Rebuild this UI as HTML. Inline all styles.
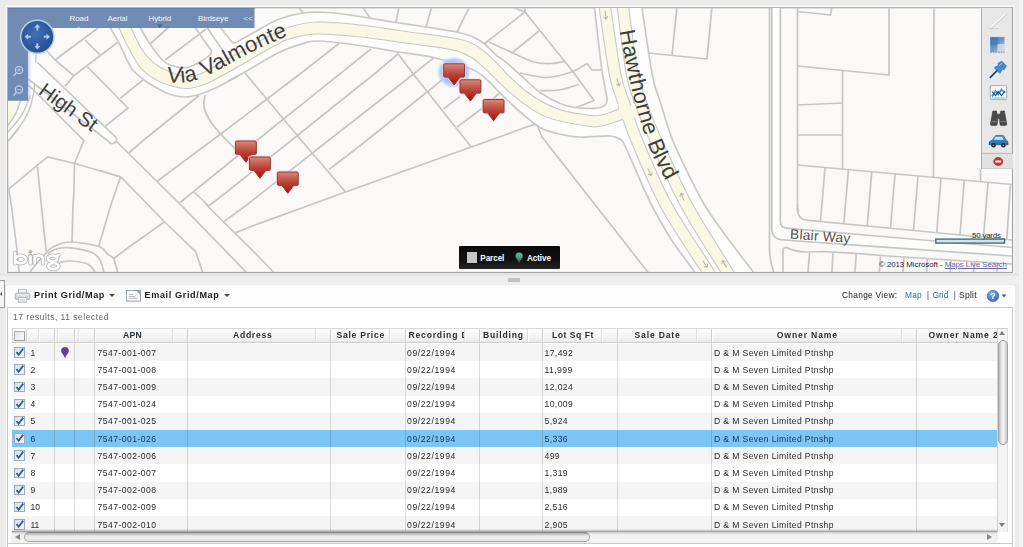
<!DOCTYPE html>
<html><head><meta charset="utf-8"><title>Map</title>
<style>
html,body{margin:0;padding:0}
body{width:1024px;height:547px;overflow:hidden;background:#ebebeb;font-family:"Liberation Sans",sans-serif;position:relative}
.abs{position:absolute}
#wrap{position:absolute;left:0;top:0;width:1024px;height:547px;filter:blur(.4px)}
#map{position:absolute;left:0;top:0;width:1024px;height:547px}
.navt{position:absolute;top:13.5px;font-size:8px;color:#fff;letter-spacing:-.1px;opacity:.93}
#legend{position:absolute;left:459.300px;top:246.100px;width:101.200px;height:22.800px;background:linear-gradient(#0a0a0a,#111 60%,#232323);border-radius:1px}
#legend span{position:absolute;top:7.500px;font-size:8.200px;color:#fff;font-weight:bold;white-space:nowrap}
#tb{position:absolute;left:981.300px;top:8px;width:31px;height:160.500px;background:#e7e7e7;border-left:1px solid #adadad;border-bottom:1px solid #b5b5b5;box-sizing:border-box;box-shadow:-1px 0 0 #fdfdfd}
#copy{position:absolute;left:879px;top:260px;font-size:7.9px;color:#2c2c2c;white-space:nowrap;letter-spacing:-.06px}
#copy u{color:#6767ad}
#scaleT{position:absolute;left:972px;top:230.600px;font-size:7.900px;white-space:nowrap;color:#222;text-shadow:0 0 1px #fff}
/* bottom */
#split{position:absolute;left:0;top:273px;width:1024px;height:12px;background:linear-gradient(#e4e4e4,#e6e6e6 22%,#eeeeee 30%,#f0f0f0 90%,#e9e9e9)}
#panel{position:absolute;left:5.600px;top:284.600px;width:1009.200px;height:263px;background:#fcfcfc;border-radius:3px 3px 0 0}
#inner{position:absolute;left:7.200px;top:307.100px;width:1006px;height:240px;background:#fff;border:1px solid #c6c6c6;border-bottom:none;box-sizing:border-box}
.tbt{position:absolute;top:289.6px;font-weight:bold;color:#1a1a1a;white-space:nowrap}
.cv{position:absolute;top:290.3px;color:#222;white-space:nowrap;font-size:8.4px}
.res{position:absolute;top:312.4px;color:#666;white-space:nowrap}
#grid{position:absolute;left:12px;top:328px;width:995px;height:215px;overflow:hidden}
#hdr{position:absolute;left:11.800px;top:327.600px;width:985.200px;height:15px;background:linear-gradient(#fcfcfc,#f5f5f5 50%,#eaeaea);border-top:1px solid #d9d9d9;border-bottom:1px solid #cdcdcd;border-left:1px solid #d4d4d4;box-sizing:border-box}
.h{position:absolute;top:330px;font-size:8.6px;font-weight:bold;color:#263034;white-space:nowrap}
.row{position:absolute;left:12px;width:985px;height:17.2px;background:#fff}
.row.alt{background:#f5f5f5}
.row.sel{background:#7cc6f5}
.row .t{position:absolute;top:3.6px;font-size:8.6px;color:#2a2a2a;white-space:nowrap}
.row.sel .t{color:#0b3c63}
.cb{position:absolute;left:2.100px;top:3.200px;width:8.800px;height:8.400px;border:1px solid #9fabb6;background:linear-gradient(135deg,#d3e2ef,#f3f7fa);}
.cb svg{position:absolute;left:0;top:0}
.pin{position:absolute;left:48.500px;top:3px}
.vl{position:absolute;top:343px;width:1px;height:189px;background:rgba(0,0,0,.13)}
.hs{position:absolute;top:328.500px;width:1px;height:13.500px;background:#dfdfdf;box-shadow:1px 0 0 #fcfcfc}
.hm{position:absolute;top:328.500px;width:1px;height:13.500px;background:#cfcfcf;box-shadow:1px 0 0 #fcfcfc}
</style></head><body><div id="wrap">
<div class="abs" style="left:5.600px;top:4.600px;width:1009.200px;height:268px;background:#f6f6f6"></div>
<svg id="map" viewBox="0 0 1024 547">
<defs>
<clipPath id="mc"><rect x="8" y="8" width="1004" height="264"/></clipPath>
<linearGradient id="mk" x1="0" y1="0" x2="0" y2="1"><stop offset="0" stop-color="#dd8b80"/><stop offset=".12" stop-color="#d2766a"/><stop offset=".45" stop-color="#bd4a3f"/><stop offset=".62" stop-color="#b5362c"/><stop offset=".72" stop-color="#c3261e"/><stop offset="1" stop-color="#8a1611"/></linearGradient>
<radialGradient id="glow"><stop offset=".5" stop-color="#8fb0f5" stop-opacity="1"/><stop offset=".8" stop-color="#a9c4f8" stop-opacity=".75"/><stop offset="1" stop-color="#c5d8fb" stop-opacity="0"/></radialGradient>
<radialGradient id="cmp" cx=".45" cy=".4" r=".7"><stop offset="0" stop-color="#3f6fb3"/><stop offset="1" stop-color="#1f4a8c"/></radialGradient>
</defs>
<rect x="7.700" y="7.800" width="1004.900" height="264.600" fill="#faf9f8" stroke="#9a9a9a" stroke-width="1"/>
<g clip-path="url(#mc)">
<path d="M219.0,26.0 C220.5,27.8 226.0,34.5 228.0,37.0 C230.0,39.5 229.7,40.1 231.0,41.0 C232.3,41.9 232.3,43.8 236.0,42.5 C239.7,41.2 246.0,36.8 253.0,33.0 C260.0,29.2 269.7,22.8 278.0,19.5 C286.3,16.2 294.7,14.2 303.0,13.0 C311.3,11.8 319.2,12.0 328.0,12.5 C336.8,13.0 344.7,14.3 356.0,16.0 C367.3,17.7 384.3,20.7 396.0,22.5 C407.7,24.3 415.8,25.4 426.0,27.0 C436.2,28.6 449.3,30.4 457.0,32.0 C464.7,33.6 467.5,34.6 472.0,36.5 C476.5,38.4 479.9,40.3 484.0,43.5 C488.1,46.7 493.2,52.7 496.5,55.5 C499.8,58.3 499.8,57.1 504.0,60.5 C508.2,63.9 515.5,70.7 521.5,76.0 C527.5,81.3 533.3,87.8 540.0,92.5 C546.7,97.2 555.0,101.4 561.5,104.0 C568.0,106.6 572.9,107.3 579.0,108.0 C585.1,108.7 593.8,108.4 598.0,108.0 C602.2,107.6 603.0,106.8 604.5,105.5 C606.0,104.2 607.1,103.9 607.0,100.0 C606.9,96.1 604.9,87.4 604.0,82.0 C603.1,76.6 601.9,69.9 601.5,67.5 L594,0 L641,0 L642.0,8.0 C643.8,19.3 649.5,60.5 652.5,76.0 C655.5,91.5 656.9,91.0 660.0,101.0 C663.1,111.0 667.3,126.0 671.0,136.0 C674.7,146.0 676.5,149.7 682.0,161.0 C687.5,172.3 696.4,191.2 704.0,204.0 C711.6,216.8 719.7,227.2 727.5,238.0 C735.3,248.8 746.2,262.7 751.0,269.0 C755.8,275.3 755.2,274.8 756.0,276.0 L697,276 L697.0,276.0 C696.2,274.8 696.8,275.2 692.5,269.0 C688.2,262.8 677.9,249.8 671.0,239.0 C664.1,228.2 656.7,215.0 651.0,204.0 C645.3,193.0 641.5,183.1 637.0,173.0 C632.5,162.9 626.2,148.4 624.0,143.5 L624.0,143.5 C623.5,142.9 623.2,141.2 621.0,140.0 C618.8,138.8 617.8,136.5 611.0,136.0 C604.2,135.5 589.0,137.4 580.0,137.0 C571.0,136.6 563.7,135.1 557.0,133.5 C550.3,131.9 545.3,130.4 540.0,127.5 C534.7,124.6 531.2,121.2 525.0,116.0 C518.8,110.8 509.8,102.5 503.0,96.0 C496.2,89.5 489.8,81.7 484.0,77.0 C478.2,72.3 476.9,71.2 468.5,68.0 C460.1,64.8 445.2,60.2 433.5,57.5 C421.8,54.8 411.4,54.1 398.5,52.0 C385.6,49.9 369.4,46.8 356.0,45.0 C342.6,43.2 326.8,41.2 318.0,41.0 C309.2,40.8 309.7,41.5 303.0,43.5 C296.3,45.5 288.7,47.7 278.0,53.0 C267.3,58.3 249.4,69.7 239.0,75.5 C228.6,81.3 221.9,84.9 215.5,88.0 C209.1,91.1 205.5,92.5 200.5,94.0 C195.5,95.5 190.8,97.0 185.5,97.0 C180.2,97.0 173.8,95.5 169.0,94.0 C164.2,92.5 161.2,90.3 157.0,88.0 C152.8,85.7 148.3,83.4 144.0,80.0 C139.7,76.6 135.0,73.3 131.0,67.5 C127.0,61.7 123.3,51.4 120.0,45.0 C116.7,38.6 113.3,33.2 111.0,29.0 C108.7,24.8 106.8,21.5 106.0,20.0 L137,20 L137.0,20.0 C137.7,21.5 138.8,25.0 141.0,29.0 C143.2,33.0 146.8,39.2 150.0,44.0 C153.2,48.8 156.7,54.0 160.0,57.5 C163.3,61.0 165.4,63.3 170.0,65.0 C174.6,66.7 182.0,68.3 187.5,67.5 C193.0,66.7 199.2,62.1 203.0,60.0 C206.8,57.9 208.6,56.5 210.0,55.0 C211.4,53.5 211.8,52.5 211.5,51.0 C211.2,49.5 208.6,46.8 208.0,46.0 L219,26 Z" fill="#fdfdfc" stroke="none"/>
<path d="M194,26 L211.5,52 L236,42.5 L219,26 Z" fill="#fdfdfc"/>
<path d="M106.0,20.0 C106.8,21.5 108.7,24.8 111.0,29.0 C113.3,33.2 116.7,38.6 120.0,45.0 C123.3,51.4 127.0,61.7 131.0,67.5 C135.0,73.3 139.7,76.6 144.0,80.0 C148.3,83.4 152.8,85.7 157.0,88.0 C161.2,90.3 164.2,92.5 169.0,94.0 C173.8,95.5 180.2,97.0 185.5,97.0 C190.8,97.0 195.5,95.5 200.5,94.0 C205.5,92.5 209.1,91.1 215.5,88.0 C221.9,84.9 228.6,81.3 239.0,75.5 C249.4,69.7 267.3,58.3 278.0,53.0 C288.7,47.7 296.3,45.5 303.0,43.5 C309.7,41.5 309.2,40.8 318.0,41.0 C326.8,41.2 342.6,43.2 356.0,45.0 C369.4,46.8 385.6,49.9 398.5,52.0 C411.4,54.1 421.8,54.8 433.5,57.5 C445.2,60.2 460.1,64.8 468.5,68.0 C476.9,71.2 478.2,72.3 484.0,77.0 C489.8,81.7 496.2,89.5 503.0,96.0 C509.8,102.5 518.8,110.8 525.0,116.0 C531.2,121.2 534.7,124.6 540.0,127.5 C545.3,130.4 550.3,131.9 557.0,133.5 C563.7,135.1 571.0,136.6 580.0,137.0 C589.0,137.4 604.2,135.5 611.0,136.0 C617.8,136.5 618.8,138.8 621.0,140.0 C623.2,141.2 623.5,142.9 624.0,143.5" fill="none" stroke="#cacac5" stroke-width="1.7"/>
<path d="M137.0,20.0 C137.7,21.5 138.8,25.0 141.0,29.0 C143.2,33.0 146.8,39.2 150.0,44.0 C153.2,48.8 156.7,54.0 160.0,57.5 C163.3,61.0 165.4,63.3 170.0,65.0 C174.6,66.7 182.0,68.3 187.5,67.5 C193.0,66.7 199.2,62.1 203.0,60.0 C206.8,57.9 208.6,56.5 210.0,55.0 C211.4,53.5 211.8,52.5 211.5,51.0 C211.2,49.5 210.9,50.2 208.0,46.0 C205.1,41.8 196.3,29.3 194.0,26.0" fill="none" stroke="#cacac5" stroke-width="1.7"/>
<path d="M219.0,26.0 C220.5,27.8 226.0,34.5 228.0,37.0 C230.0,39.5 229.7,40.1 231.0,41.0 C232.3,41.9 232.3,43.8 236.0,42.5 C239.7,41.2 246.0,36.8 253.0,33.0 C260.0,29.2 269.7,22.8 278.0,19.5 C286.3,16.2 294.7,14.2 303.0,13.0 C311.3,11.8 319.2,12.0 328.0,12.5 C336.8,13.0 344.7,14.3 356.0,16.0 C367.3,17.7 384.3,20.7 396.0,22.5 C407.7,24.3 415.8,25.4 426.0,27.0 C436.2,28.6 449.3,30.4 457.0,32.0 C464.7,33.6 467.5,34.6 472.0,36.5 C476.5,38.4 479.9,40.3 484.0,43.5 C488.1,46.7 493.2,52.7 496.5,55.5 C499.8,58.3 499.8,57.1 504.0,60.5 C508.2,63.9 515.5,70.7 521.5,76.0 C527.5,81.3 533.3,87.8 540.0,92.5 C546.7,97.2 555.0,101.4 561.5,104.0 C568.0,106.6 572.9,107.3 579.0,108.0 C585.1,108.7 593.8,108.4 598.0,108.0 C602.2,107.6 603.0,106.8 604.5,105.5 C606.0,104.2 607.1,103.9 607.0,100.0 C606.9,96.1 604.9,87.4 604.0,82.0 C603.1,76.6 603.1,79.8 601.5,67.5 C599.9,55.2 595.8,19.2 594.5,8.0 C593.2,-3.2 594.1,1.3 594.0,0.0" fill="none" stroke="#cacac5" stroke-width="1.7"/>
<path d="M641.0,0.0 C641.2,1.3 640.1,-4.7 642.0,8.0 C643.9,20.7 649.5,60.5 652.5,76.0 C655.5,91.5 656.9,91.0 660.0,101.0 C663.1,111.0 667.3,126.0 671.0,136.0 C674.7,146.0 676.5,149.7 682.0,161.0 C687.5,172.3 696.4,191.2 704.0,204.0 C711.6,216.8 719.7,227.2 727.5,238.0 C735.3,248.8 746.2,262.7 751.0,269.0 C755.8,275.3 755.2,274.8 756.0,276.0" fill="none" stroke="#cacac5" stroke-width="1.7"/>
<path d="M624.0,143.5 C626.2,148.4 632.5,162.9 637.0,173.0 C641.5,183.1 645.3,193.0 651.0,204.0 C656.7,215.0 664.1,228.2 671.0,239.0 C677.9,249.8 688.2,262.8 692.5,269.0 C696.8,275.2 696.2,274.8 697.0,276.0" fill="none" stroke="#cacac5" stroke-width="1.7"/>
<path d="M206.0,26.0 L222.5,50.0" fill="none" stroke="#cacac5" stroke-width="1.7"/>
<path d="M127.0,20.0 C127.7,21.5 128.7,24.2 131.0,29.0 C133.3,33.8 137.4,43.4 141.0,49.0 C144.6,54.6 148.1,58.8 152.5,62.5 C156.9,66.2 162.0,69.1 167.5,71.5 C173.0,73.9 180.1,76.5 185.5,77.0 C190.9,77.5 195.1,76.2 200.0,74.5 C204.9,72.8 208.3,70.6 215.0,67.0 C221.7,63.4 230.8,58.2 240.0,53.0 C249.2,47.8 262.0,40.2 270.0,36.0 C278.0,31.8 280.4,30.2 288.0,28.0 C295.6,25.8 304.2,23.0 315.5,22.5 C326.8,22.0 340.9,23.4 356.0,25.0 C371.1,26.6 389.3,29.7 406.0,32.0 C422.7,34.3 445.0,37.0 456.0,39.0 C467.0,41.0 467.3,41.8 472.0,44.0 C476.7,46.2 480.5,49.3 484.0,52.0 C487.5,54.7 487.8,54.9 493.0,60.0 C498.2,65.1 507.8,76.0 515.0,82.5 C522.2,89.0 529.2,94.4 536.5,99.0 C543.8,103.6 551.1,107.3 559.0,110.0 C566.9,112.7 577.3,114.0 584.0,115.0 C590.7,116.0 593.4,116.8 599.0,116.0 C604.6,115.2 614.1,111.7 617.5,110.0 C620.9,108.3 619.2,106.7 619.5,106.0 L622.5,119.0 C618.6,120.2 605.4,125.0 599.0,126.0 C592.6,127.0 591.5,126.2 584.0,125.0 C576.5,123.8 562.3,121.5 554.0,119.0 C545.7,116.5 541.5,114.7 534.0,110.0 C526.5,105.3 517.3,98.2 509.0,91.0 C500.7,83.8 490.5,72.8 484.0,67.0 C477.5,61.2 475.5,59.0 470.0,56.0 C464.5,53.0 461.7,51.2 451.0,49.0 C440.3,46.8 421.8,44.7 406.0,42.5 C390.2,40.3 371.1,37.5 356.0,36.0 C340.9,34.5 326.7,33.1 315.5,33.5 C304.3,33.9 296.0,36.5 289.0,38.5 C282.0,40.5 282.8,40.7 273.8,45.6 C264.7,50.5 244.9,62.4 234.8,68.1 C224.6,73.8 218.8,77.1 213.0,80.0 C207.2,82.9 204.6,84.2 200.0,85.5 C195.4,86.8 190.5,88.1 185.5,88.0 C180.5,87.9 174.9,86.5 170.0,85.0 C165.1,83.5 160.8,81.9 156.0,79.0 C151.2,76.1 145.5,72.8 141.0,67.5 C136.5,62.2 132.5,53.9 129.0,47.5 C125.5,41.1 122.2,33.6 120.0,29.0 C117.8,24.4 116.7,21.5 116.0,20.0 Z" fill="#f9f8e4" stroke="#cacac5" stroke-width="2.2" stroke-linejoin="round"/>
<path d="M604.0,0.0 C604.2,1.3 603.1,-4.7 605.0,8.0 C606.9,20.7 612.2,59.7 615.5,76.0 C618.8,92.3 621.8,96.0 625.0,106.0 C628.2,116.0 628.2,119.7 635.0,136.0 C641.8,152.3 653.6,181.8 665.5,204.0 C677.4,226.2 698.8,256.8 706.5,269.0 C714.2,281.2 710.7,275.7 711.5,277.0" fill="none" stroke="#cacac5" stroke-width="12.6"/>
<path d="M622.0,0.0 C622.2,1.3 621.2,-4.7 623.0,8.0 C624.8,20.7 629.3,59.7 632.5,76.0 C635.7,92.3 638.4,96.0 642.0,106.0 C645.6,116.0 646.7,119.7 654.0,136.0 C661.3,152.3 674.1,181.8 686.0,204.0 C697.9,226.2 718.1,256.8 725.5,269.0 C732.9,281.2 729.7,275.7 730.5,277.0" fill="none" stroke="#cacac5" stroke-width="12.6"/>
<path d="M127.0,20.0 C127.7,21.5 128.7,24.2 131.0,29.0 C133.3,33.8 137.4,43.4 141.0,49.0 C144.6,54.6 148.1,58.8 152.5,62.5 C156.9,66.2 162.0,69.1 167.5,71.5 C173.0,73.9 180.1,76.5 185.5,77.0 C190.9,77.5 195.1,76.2 200.0,74.5 C204.9,72.8 208.3,70.6 215.0,67.0 C221.7,63.4 230.8,58.2 240.0,53.0 C249.2,47.8 262.0,40.2 270.0,36.0 C278.0,31.8 280.4,30.2 288.0,28.0 C295.6,25.8 304.2,23.0 315.5,22.5 C326.8,22.0 340.9,23.4 356.0,25.0 C371.1,26.6 389.3,29.7 406.0,32.0 C422.7,34.3 445.0,37.0 456.0,39.0 C467.0,41.0 467.3,41.8 472.0,44.0 C476.7,46.2 480.5,49.3 484.0,52.0 C487.5,54.7 487.8,54.9 493.0,60.0 C498.2,65.1 507.8,76.0 515.0,82.5 C522.2,89.0 529.2,94.4 536.5,99.0 C543.8,103.6 551.1,107.3 559.0,110.0 C566.9,112.7 577.3,114.0 584.0,115.0 C590.7,116.0 593.4,116.8 599.0,116.0 C604.6,115.2 614.1,111.7 617.5,110.0 C620.9,108.3 619.2,106.7 619.5,106.0 L622.5,119.0 C618.6,120.2 605.4,125.0 599.0,126.0 C592.6,127.0 591.5,126.2 584.0,125.0 C576.5,123.8 562.3,121.5 554.0,119.0 C545.7,116.5 541.5,114.7 534.0,110.0 C526.5,105.3 517.3,98.2 509.0,91.0 C500.7,83.8 490.5,72.8 484.0,67.0 C477.5,61.2 475.5,59.0 470.0,56.0 C464.5,53.0 461.7,51.2 451.0,49.0 C440.3,46.8 421.8,44.7 406.0,42.5 C390.2,40.3 371.1,37.5 356.0,36.0 C340.9,34.5 326.7,33.1 315.5,33.5 C304.3,33.9 296.0,36.5 289.0,38.5 C282.0,40.5 282.8,40.7 273.8,45.6 C264.7,50.5 244.9,62.4 234.8,68.1 C224.6,73.8 218.8,77.1 213.0,80.0 C207.2,82.9 204.6,84.2 200.0,85.5 C195.4,86.8 190.5,88.1 185.5,88.0 C180.5,87.9 174.9,86.5 170.0,85.0 C165.1,83.5 160.8,81.9 156.0,79.0 C151.2,76.1 145.5,72.8 141.0,67.5 C136.5,62.2 132.5,53.9 129.0,47.5 C125.5,41.1 122.2,33.6 120.0,29.0 C117.8,24.4 116.7,21.5 116.0,20.0 Z" fill="#f9f8e4" stroke="none"/>
<path d="M604.0,0.0 C604.2,1.3 603.1,-4.7 605.0,8.0 C606.9,20.7 612.2,59.7 615.5,76.0 C618.8,92.3 621.8,96.0 625.0,106.0 C628.2,116.0 628.2,119.7 635.0,136.0 C641.8,152.3 653.6,181.8 665.5,204.0 C677.4,226.2 698.8,256.8 706.5,269.0 C714.2,281.2 710.7,275.7 711.5,277.0" fill="none" stroke="#f9f8e4" stroke-width="10.4"/>
<path d="M622.0,0.0 C622.2,1.3 621.2,-4.7 623.0,8.0 C624.8,20.7 629.3,59.7 632.5,76.0 C635.7,92.3 638.4,96.0 642.0,106.0 C645.6,116.0 646.7,119.7 654.0,136.0 C661.3,152.3 674.1,181.8 686.0,204.0 C697.9,226.2 718.1,256.8 725.5,269.0 C732.9,281.2 729.7,275.7 730.5,277.0" fill="none" stroke="#f9f8e4" stroke-width="10.4"/>
<path d="M618,104 L632,106 L636,117 L623,120 Z" fill="#f9f8e4"/>
<g transform="translate(605.5,15) rotate(-8)" stroke="#b4b4aa" stroke-width="1" fill="none"><path d="M0,-4 L0,4 M-2.2,1.5 L0,4 L2.2,1.5"/></g>
<g transform="translate(618,82) rotate(-17)" stroke="#b4b4aa" stroke-width="1" fill="none"><path d="M0,-4 L0,4 M-2.2,1.5 L0,4 L2.2,1.5"/></g>
<g transform="translate(649.5,172) rotate(-24)" stroke="#b4b4aa" stroke-width="1" fill="none"><path d="M0,-4 L0,4 M-2.2,1.5 L0,4 L2.2,1.5"/></g>
<g transform="translate(705,264) rotate(-32)" stroke="#b4b4aa" stroke-width="1" fill="none"><path d="M0,-4 L0,4 M-2.2,1.5 L0,4 L2.2,1.5"/></g>
<g transform="translate(682.5,197) rotate(156)" stroke="#b4b4aa" stroke-width="1" fill="none"><path d="M0,-4 L0,4 M-2.2,1.5 L0,4 L2.2,1.5"/></g>
<g transform="translate(724.5,264) rotate(148)" stroke="#b4b4aa" stroke-width="1" fill="none"><path d="M0,-4 L0,4 M-2.2,1.5 L0,4 L2.2,1.5"/></g>
<path d="M36.2,52.0 C36.1,53.5 36.2,54.6 35.8,61.0 C35.4,67.4 35.3,81.8 34.0,90.4 C32.7,99.0 31.0,105.9 28.0,112.8 C25.0,119.7 19.3,127.0 16.0,131.7 C12.7,136.4 10.0,139.0 8.3,141.0 C6.6,143.0 6.4,143.1 6.0,143.5 L6,52 Z" fill="#fdfdfc"/>
<path d="M22.5,95.0 C22.1,96.1 21.4,98.6 20.3,101.6 C19.2,104.6 18.0,108.9 16.0,112.8 C14.0,116.7 10.0,122.3 8.3,124.8 C6.6,127.3 6.4,127.5 6.0,128.0 L6,95 L22.5,95 Z" fill="#f9f8e4"/>
<path d="M36.2,52.0 C36.1,53.5 36.2,54.6 35.8,61.0 C35.4,67.4 35.3,81.8 34.0,90.4 C32.7,99.0 31.0,105.9 28.0,112.8 C25.0,119.7 19.3,127.0 16.0,131.7 C12.7,136.4 10.0,139.0 8.3,141.0 C6.6,143.0 6.4,143.1 6.0,143.5" fill="none" stroke="#cacac5" stroke-width="1.5"/>
<path d="M30.5,95.0 C30.1,96.1 29.2,98.6 28.0,101.6 C26.8,104.6 25.3,108.9 23.0,112.8 C20.7,116.7 16.8,121.7 14.3,124.8 C11.9,127.9 9.7,130.2 8.3,131.7 C6.9,133.2 6.4,133.6 6.0,134.0" fill="none" stroke="#cacac5" stroke-width="1.5"/>
<path d="M22.5,95.0 C22.1,96.1 21.4,98.6 20.3,101.6 C19.2,104.6 18.0,108.9 16.0,112.8 C14.0,116.7 10.0,122.3 8.3,124.8 C6.6,127.3 6.4,127.5 6.0,128.0" fill="none" stroke="#cacac5" stroke-width="1.5"/>
<path d="M37.5,62.5 L115.5,137 L116.5,139.5 L115,142.5 L111,143.5 L108,141 L32,82 L28,79 V62 Z" fill="#fdfdfc"/>
<path d="M47.0,51.0 L55.0,60.0 L73.8,75.6" fill="none" stroke="#c6c6c6" stroke-width="1.7" stroke-linejoin="round"/>
<path d="M55.0,60.0 L96.0,29.5 L100.0,26.0" fill="none" stroke="#c6c6c6" stroke-width="1.7" stroke-linejoin="round"/>
<path d="M85.0,40.0 L100.0,55.0" fill="none" stroke="#c6c6c6" stroke-width="1.7" stroke-linejoin="round"/>
<path d="M73.8,75.6 L117.5,42.5" fill="none" stroke="#c6c6c6" stroke-width="1.7" stroke-linejoin="round"/>
<path d="M65.0,86.2 L73.8,75.6" fill="none" stroke="#c6c6c6" stroke-width="1.7" stroke-linejoin="round"/>
<path d="M87.5,67.0 L128.0,108.0 L105.5,126.0" fill="none" stroke="#c6c6c6" stroke-width="1.7" stroke-linejoin="round"/>
<path d="M120.5,98.0 L143.0,80.0" fill="none" stroke="#c6c6c6" stroke-width="1.7" stroke-linejoin="round"/>
<path d="M37.5,62.5 L115.5,137.0" fill="none" stroke="#c6c6c6" stroke-width="1.7" stroke-linejoin="round"/>
<path d="M28.0,79.0 L32.0,82.0 L108.0,141.0" fill="none" stroke="#c6c6c6" stroke-width="1.7" stroke-linejoin="round"/>
<path d="M28.0,85.0 L32.0,88.5 L83.8,140.5 L74.5,163.5 L73.8,195.5 L73.0,204.0 L72.0,242.8" fill="none" stroke="#c6c6c6" stroke-width="1.7" stroke-linejoin="round"/>
<path d="M18.8,128.0 L8.0,141.0" fill="none" stroke="#c6c6c6" stroke-width="1.7" stroke-linejoin="round"/>
<path d="M8.0,189.5 L47.5,156.8 L75.0,163.5 L121.0,177.0" fill="none" stroke="#c6c6c6" stroke-width="1.7" stroke-linejoin="round"/>
<path d="M37.5,166.8 L41.2,204.0 L46.2,251.5" fill="none" stroke="#c6c6c6" stroke-width="1.7" stroke-linejoin="round"/>
<path d="M8.8,189.0 L11.2,204.0 L17.5,254.0 L19.0,272.0" fill="none" stroke="#c6c6c6" stroke-width="1.7" stroke-linejoin="round"/>
<path d="M120.5,177.0 L111.2,204.0 L98.8,246.0" fill="none" stroke="#c6c6c6" stroke-width="1.7" stroke-linejoin="round"/>
<path d="M116.0,141.0 L181.0,205.0 L245.5,271.5 L250.0,276.0" fill="none" stroke="#c6c6c6" stroke-width="1.7" stroke-linejoin="round"/>
<path d="M100.0,170.5 L121.0,177.0 L164.2,221.5 L195.5,251.5 L202.4,271.5 L203.0,276.0" fill="none" stroke="#c6c6c6" stroke-width="1.7" stroke-linejoin="round"/>
<path d="M164.2,222.0 L128.0,247.8 L113.8,258.5" fill="none" stroke="#c6c6c6" stroke-width="1.7" stroke-linejoin="round"/>
<path d="M128.8,153.0 L143.8,140.0 L199.0,95.5" fill="none" stroke="#c6c6c6" stroke-width="1.7" stroke-linejoin="round"/>
<path d="M157.5,181.0 L228.0,128.5 L298.0,75.5 L339.0,43.5" fill="none" stroke="#c6c6c6" stroke-width="1.7" stroke-linejoin="round"/>
<path d="M180.0,202.5 L256.8,140.5 L336.8,76.3 L371.0,49.0" fill="none" stroke="#c6c6c6" stroke-width="1.7" stroke-linejoin="round"/>
<path d="M193.8,192.0 L208.8,206.0" fill="none" stroke="#c6c6c6" stroke-width="1.7" stroke-linejoin="round"/>
<path d="M208.8,206.0 L228.0,191.0 L291.8,140.0 L356.0,88.5 L372.0,76.0 L398.0,54.0" fill="none" stroke="#c6c6c6" stroke-width="1.7" stroke-linejoin="round"/>
<path d="M205.5,204.0 L256.0,254.0 L273.5,272.0 L278.0,277.0" fill="none" stroke="#c6c6c6" stroke-width="1.7" stroke-linejoin="round"/>
<path d="M224.2,221.5 L248.0,204.0 L329.0,140.0 L356.0,119.0 L411.0,76.0 L433.5,58.0" fill="none" stroke="#c6c6c6" stroke-width="1.7" stroke-linejoin="round"/>
<path d="M235.5,232.8 L256.0,224.6 L303.0,207.5 L345.5,192.0 L511.5,132.5 L525.0,127.5 L536.5,124.0" fill="none" stroke="#c6c6c6" stroke-width="1.7" stroke-linejoin="round"/>
<path d="M245.0,73.0 L304.0,143.5 L345.5,192.0" fill="none" stroke="#c6c6c6" stroke-width="1.7" stroke-linejoin="round"/>
<path d="M329.0,169.5 L361.0,145.0 L442.0,80.0" fill="none" stroke="#c6c6c6" stroke-width="1.7" stroke-linejoin="round"/>
<path d="M397.0,52.5 L414.8,76.0 L468.5,143.5 L471.0,147.0" fill="none" stroke="#c6c6c6" stroke-width="1.7" stroke-linejoin="round"/>
<path d="M443.5,109.0 L460.0,96.5" fill="none" stroke="#c6c6c6" stroke-width="1.7" stroke-linejoin="round"/>
<path d="M457.0,127.0 L484.0,107.0 L500.0,92.5" fill="none" stroke="#c6c6c6" stroke-width="1.7" stroke-linejoin="round"/>
<path d="M228.0,81.0 L239.0,75.5" fill="none" stroke="#c6c6c6" stroke-width="1.7" stroke-linejoin="round"/>
<path d="M150.0,44.0 L170.0,26.0" fill="none" stroke="#c6c6c6" stroke-width="1.7" stroke-linejoin="round"/>
<path d="M165.0,60.0 L197.5,35.6 L206.0,29.0" fill="none" stroke="#c6c6c6" stroke-width="1.7" stroke-linejoin="round"/>
<path d="M298.0,6.0 L303.0,13.0" fill="none" stroke="#c6c6c6" stroke-width="1.7" stroke-linejoin="round"/>
<path d="M362.0,6.0 L370.0,18.0" fill="none" stroke="#c6c6c6" stroke-width="1.7" stroke-linejoin="round"/>
<path d="M399.0,6.0 L396.0,22.5" fill="none" stroke="#c6c6c6" stroke-width="1.7" stroke-linejoin="round"/>
<path d="M432.0,6.0 L426.0,27.0" fill="none" stroke="#c6c6c6" stroke-width="1.7" stroke-linejoin="round"/>
<path d="M470.0,6.0 L457.0,32.0" fill="none" stroke="#c6c6c6" stroke-width="1.7" stroke-linejoin="round"/>
<path d="M509.0,6.0 L525.0,12.0 L525.0,6.0" fill="none" stroke="#c6c6c6" stroke-width="1.7" stroke-linejoin="round"/>
<path d="M484.0,44.0 L525.0,12.0 L574.0,73.0 L594.0,100.5 L576.5,107.5" fill="none" stroke="#c6c6c6" stroke-width="1.7" stroke-linejoin="round"/>
<path d="M513.0,52.0 L539.0,31.0" fill="none" stroke="#c6c6c6" stroke-width="1.7" stroke-linejoin="round"/>
<path d="M587.0,63.5 L592.0,70.0 L601.5,70.0" fill="none" stroke="#c6c6c6" stroke-width="1.7" stroke-linejoin="round"/>
<path d="M537.0,125.0 L542.0,137.0 L647.0,271.0 L651.0,276.0" fill="none" stroke="#c6c6c6" stroke-width="1.7" stroke-linejoin="round"/>
<path d="M677.0,6.0 L672.0,55.5" fill="none" stroke="#c6c6c6" stroke-width="1.7" stroke-linejoin="round"/>
<path d="M648.0,53.0 L707.0,59.0 L712.0,6.0" fill="none" stroke="#c6c6c6" stroke-width="1.7" stroke-linejoin="round"/>
<path d="M797.5,6.0 L797.5,204.0 L797.7,211.5" fill="none" stroke="#c6c6c6" stroke-width="1.7" stroke-linejoin="round"/>
<path d="M797.5,11.5 L830.5,15.0 L832.0,6.0" fill="none" stroke="#c6c6c6" stroke-width="1.7" stroke-linejoin="round"/>
<path d="M889.0,6.0 L889.0,75.0 L797.5,66.0" fill="none" stroke="#c6c6c6" stroke-width="1.7" stroke-linejoin="round"/>
<path d="M842.5,71.0 L842.5,169.0" fill="none" stroke="#c6c6c6" stroke-width="1.7" stroke-linejoin="round"/>
<path d="M797.5,105.0 L842.5,103.0" fill="none" stroke="#c6c6c6" stroke-width="1.7" stroke-linejoin="round"/>
<path d="M797.5,135.0 L842.5,135.0" fill="none" stroke="#c6c6c6" stroke-width="1.7" stroke-linejoin="round"/>
<path d="M934.0,6.0 L933.5,177.0" fill="none" stroke="#c6c6c6" stroke-width="1.7" stroke-linejoin="round"/>
<path d="M980.5,168.0 L980.5,182.0" fill="none" stroke="#c6c6c6" stroke-width="1.7" stroke-linejoin="round"/>
<path d="M797.5,165.0 L1012.0,184.5" fill="none" stroke="#c6c6c6" stroke-width="1.7" stroke-linejoin="round"/>
<path d="M809.5,253.0 L808.0,272.0" fill="none" stroke="#c6c6c6" stroke-width="1.7" stroke-linejoin="round"/>
<path d="M833.0,252.0 L832.0,272.0" fill="none" stroke="#c6c6c6" stroke-width="1.7" stroke-linejoin="round"/>
<path d="M856.2,253.4 L855.0,272.0" fill="none" stroke="#c6c6c6" stroke-width="1.7" stroke-linejoin="round"/>
<path d="M880.6,255.2 L879.4,272.0" fill="none" stroke="#c6c6c6" stroke-width="1.7" stroke-linejoin="round"/>
<path d="M904.0,257.0 L903.0,272.0" fill="none" stroke="#c6c6c6" stroke-width="1.7" stroke-linejoin="round"/>
<path d="M927.5,258.5 L926.5,272.0" fill="none" stroke="#c6c6c6" stroke-width="1.7" stroke-linejoin="round"/>
<path d="M951.0,260.0 L950.0,272.0" fill="none" stroke="#c6c6c6" stroke-width="1.7" stroke-linejoin="round"/>
<path d="M974.5,261.5 L973.5,272.0" fill="none" stroke="#c6c6c6" stroke-width="1.7" stroke-linejoin="round"/>
<path d="M998.0,263.0 L997.0,272.0" fill="none" stroke="#c6c6c6" stroke-width="1.7" stroke-linejoin="round"/>
<path d="M825,167.5 L820.5,221.5" fill="none" stroke="#c6c6c6" stroke-width="1.7"/>
<path d="M848.5,169.6 L843.75,223.7" fill="none" stroke="#c6c6c6" stroke-width="1.7"/>
<path d="M871.75,171.8 L867.25,226.0" fill="none" stroke="#c6c6c6" stroke-width="1.7"/>
<path d="M895,173.9 L890.5,228.2" fill="none" stroke="#c6c6c6" stroke-width="1.7"/>
<path d="M918,176.0 L913.5,230.5" fill="none" stroke="#c6c6c6" stroke-width="1.7"/>
<path d="M941,178.0 L936.75,232.7" fill="none" stroke="#c6c6c6" stroke-width="1.7"/>
<path d="M964.25,180.2 L960,234.9" fill="none" stroke="#c6c6c6" stroke-width="1.7"/>
<path d="M988,182.3 L983.5,237.2" fill="none" stroke="#c6c6c6" stroke-width="1.7"/>
<path d="M1010.5,184.4 L1006.75,239.4" fill="none" stroke="#c6c6c6" stroke-width="1.7"/>
<path d="M205.0,95.0 C204.8,97.0 203.3,103.0 204.0,107.0 C204.7,111.0 206.2,114.5 209.0,119.0 C211.8,123.5 216.1,129.0 220.5,134.0 C224.9,139.0 232.2,145.8 235.5,149.0 C238.8,152.2 239.2,152.3 240.0,153.0" fill="none" stroke="#c6c6c6" stroke-width="1.7"/>
<path d="M489.0,42.0 C493.0,43.8 505.5,49.7 513.0,53.0 C520.5,56.3 527.6,60.2 534.0,62.0 C540.4,63.8 546.3,63.7 551.5,63.5 C556.7,63.3 562.8,61.4 565.0,61.0" fill="none" stroke="#c6c6c6" stroke-width="1.7"/>
<path d="M520.0,73.0 C524.4,73.8 537.9,77.7 546.5,77.5 C555.1,77.3 564.8,74.3 571.5,72.0 C578.2,69.7 584.4,64.9 587.0,63.5" fill="none" stroke="#c6c6c6" stroke-width="1.7"/>
<path d="M540.0,90.5 C543.2,90.4 552.5,91.0 559.0,90.0 C565.5,89.0 575.7,85.4 579.0,84.5" fill="none" stroke="#c6c6c6" stroke-width="1.7"/>
<path d="M46.2,252.8 C47.5,251.7 49.8,248.3 53.8,246.5 C57.7,244.7 62.5,242.0 70.0,242.0 C77.5,242.0 92.5,244.5 98.8,246.5 C105.0,248.5 105.0,251.9 107.5,254.0 C110.0,256.1 112.1,256.0 113.8,259.0 C115.4,262.0 116.8,269.2 117.5,272.0 C118.2,274.8 117.9,275.3 118.0,276.0" fill="none" stroke="#c6c6c6" stroke-width="1.7"/>
<path d="M47.5,254.0 C49.0,253.2 52.5,250.0 56.2,249.0 C60.0,248.0 64.0,247.1 70.0,247.8 C76.0,248.4 87.5,250.7 92.5,252.8 C97.5,254.8 98.1,256.8 100.0,260.0 C101.9,263.2 103.1,269.3 103.8,272.0 C104.4,274.7 104.0,275.3 104.0,276.0" fill="none" stroke="#c6c6c6" stroke-width="1.7"/>
<path d="M58.8,262.8 C60.6,262.5 65.2,260.8 70.0,261.0 C74.8,261.2 83.3,262.2 87.5,264.0 C91.7,265.8 93.6,270.0 95.0,272.0 C96.4,274.0 95.8,275.3 96.0,276.0" fill="none" stroke="#c6c6c6" stroke-width="1.7"/>
<path d="M30.0,272.0 C31.3,270.3 35.3,265.2 38.0,262.0 C40.7,258.8 44.9,254.3 46.2,252.8" fill="none" stroke="#c6c6c6" stroke-width="1.7"/>
<path d="M108.0,141.0 C108.5,141.4 109.8,143.2 111.0,143.5 C112.2,143.8 114.1,143.2 115.0,142.5 C115.9,141.8 116.4,140.4 116.5,139.5 C116.6,138.6 115.7,137.4 115.5,137.0" fill="none" stroke="#c6c6c6" stroke-width="1.7"/>
<path d="M771.8,0 V229 Q772,238.5 781,239.6 L797.5,241 L888,247.3 L1012,256 V247.5 L888,237 L786.5,228.2 Q780.5,227.6 780.3,221.5 V0 Z" fill="#fdfdfc"/>
<path d="M769.5,0 V250 Q769.8,262 774,273" fill="none" stroke="#c6c6c6" stroke-width="1.7"/>
<path d="M771.8,0 V229 Q772,238.5 781,239.6 L797.5,241 L888,247.3 L1012,256" fill="none" stroke="#c6c6c6" stroke-width="1.7"/>
<path d="M780.3,0 V221.5 Q780.5,227.6 786.5,228.2 L888,237 L1012,247.5" fill="none" stroke="#c6c6c6" stroke-width="1.7"/>
<path d="M797.5,204 V210.5 Q798,219.6 808,220.4 L888,228 L1012,240" fill="none" stroke="#c6c6c6" stroke-width="1.7"/>
<path d="M783,276 V251 Q783,246.6 787,247.9 Q797,252.2 808,252 L822.5,251.5 L855,253.4 L888,256 L1012,264" fill="none" stroke="#c6c6c6" stroke-width="1.7"/>
<g font-family="Liberation Sans, sans-serif" fill="#3e3e3e">
<path id="pv" d="M166.500,81.500 C176.500,84 188.500,83 198.500,79 C213.500,73.500 226.500,65.500 238.500,59 C256.500,49 273.500,42 294.500,32.500" fill="none"/>
<text font-size="22" letter-spacing=".3"><textPath href="#pv" startOffset="0">Via Valmonte</textPath></text>
<path id="ph" d="M619.5,31 C625,60 633,100 643,130 S655,160 670,188" fill="none"/>
<text font-size="22" letter-spacing=".22"><textPath href="#ph" startOffset="0">Hawthorne Blvd</textPath></text>
<text font-size="20.3" transform="translate(37.6,93.2) rotate(35.8)">High St</text>
<text font-size="13.700" fill="#505050" letter-spacing=".28" transform="translate(789.800,238.500) rotate(4.200)">Blair Way</text>
</g>
<ellipse cx="453.9" cy="72.3" rx="17.500" ry="16.500" fill="url(#glow)"/><path d="M444.9,63.8 h18.4 a1.2,1.2 0 0 1 1.2,1.2 v10.9 a1.2,1.2 0 0 1 -1.2,1.2 h-3.2 l-6,7.9 l-6,-7.9 h-3.2 a1.2,1.2 0 0 1 -1.2,-1.2 v-10.9 a1.2,1.2 0 0 1 1.2,-1.2 z" fill="none" stroke="#f9d9d4" stroke-width="2.8" opacity=".8"/><path d="M444.9,63.8 h18.4 a1.2,1.2 0 0 1 1.2,1.2 v10.9 a1.2,1.2 0 0 1 -1.2,1.2 h-3.2 l-6,7.9 l-6,-7.9 h-3.2 a1.2,1.2 0 0 1 -1.2,-1.2 v-10.9 a1.2,1.2 0 0 1 1.2,-1.2 z" fill="url(#mk)" stroke="#8c3a33" stroke-width="1"/><path d="M461.2,79.8 h18.4 a1.2,1.2 0 0 1 1.2,1.2 v10.9 a1.2,1.2 0 0 1 -1.2,1.2 h-3.2 l-6,7.9 l-6,-7.9 h-3.2 a1.2,1.2 0 0 1 -1.2,-1.2 v-10.9 a1.2,1.2 0 0 1 1.2,-1.2 z" fill="none" stroke="#f9d9d4" stroke-width="2.8" opacity=".8"/><path d="M461.2,79.8 h18.4 a1.2,1.2 0 0 1 1.2,1.2 v10.9 a1.2,1.2 0 0 1 -1.2,1.2 h-3.2 l-6,7.9 l-6,-7.9 h-3.2 a1.2,1.2 0 0 1 -1.2,-1.2 v-10.9 a1.2,1.2 0 0 1 1.2,-1.2 z" fill="url(#mk)" stroke="#8c3a33" stroke-width="1"/><path d="M484.4,99.5 h18.4 a1.2,1.2 0 0 1 1.2,1.2 v10.9 a1.2,1.2 0 0 1 -1.2,1.2 h-3.2 l-6,7.9 l-6,-7.9 h-3.2 a1.2,1.2 0 0 1 -1.2,-1.2 v-10.9 a1.2,1.2 0 0 1 1.2,-1.2 z" fill="none" stroke="#f9d9d4" stroke-width="2.8" opacity=".8"/><path d="M484.4,99.5 h18.4 a1.2,1.2 0 0 1 1.2,1.2 v10.9 a1.2,1.2 0 0 1 -1.2,1.2 h-3.2 l-6,7.9 l-6,-7.9 h-3.2 a1.2,1.2 0 0 1 -1.2,-1.2 v-10.9 a1.2,1.2 0 0 1 1.2,-1.2 z" fill="url(#mk)" stroke="#8c3a33" stroke-width="1"/><path d="M236.7,141 h18.4 a1.2,1.2 0 0 1 1.2,1.2 v10.9 a1.2,1.2 0 0 1 -1.2,1.2 h-3.2 l-6,7.9 l-6,-7.9 h-3.2 a1.2,1.2 0 0 1 -1.2,-1.2 v-10.9 a1.2,1.2 0 0 1 1.2,-1.2 z" fill="none" stroke="#f9d9d4" stroke-width="2.8" opacity=".8"/><path d="M236.7,141 h18.4 a1.2,1.2 0 0 1 1.2,1.2 v10.9 a1.2,1.2 0 0 1 -1.2,1.2 h-3.2 l-6,7.9 l-6,-7.9 h-3.2 a1.2,1.2 0 0 1 -1.2,-1.2 v-10.9 a1.2,1.2 0 0 1 1.2,-1.2 z" fill="url(#mk)" stroke="#8c3a33" stroke-width="1"/><path d="M250.7,157 h18.4 a1.2,1.2 0 0 1 1.2,1.2 v10.9 a1.2,1.2 0 0 1 -1.2,1.2 h-3.2 l-6,7.9 l-6,-7.9 h-3.2 a1.2,1.2 0 0 1 -1.2,-1.2 v-10.9 a1.2,1.2 0 0 1 1.2,-1.2 z" fill="none" stroke="#f9d9d4" stroke-width="2.8" opacity=".8"/><path d="M250.7,157 h18.4 a1.2,1.2 0 0 1 1.2,1.2 v10.9 a1.2,1.2 0 0 1 -1.2,1.2 h-3.2 l-6,7.9 l-6,-7.9 h-3.2 a1.2,1.2 0 0 1 -1.2,-1.2 v-10.9 a1.2,1.2 0 0 1 1.2,-1.2 z" fill="url(#mk)" stroke="#8c3a33" stroke-width="1"/><path d="M278.59999999999997,172 h18.4 a1.2,1.2 0 0 1 1.2,1.2 v10.9 a1.2,1.2 0 0 1 -1.2,1.2 h-3.2 l-6,7.9 l-6,-7.9 h-3.2 a1.2,1.2 0 0 1 -1.2,-1.2 v-10.9 a1.2,1.2 0 0 1 1.2,-1.2 z" fill="none" stroke="#f9d9d4" stroke-width="2.8" opacity=".8"/><path d="M278.59999999999997,172 h18.4 a1.2,1.2 0 0 1 1.2,1.2 v10.9 a1.2,1.2 0 0 1 -1.2,1.2 h-3.2 l-6,7.9 l-6,-7.9 h-3.2 a1.2,1.2 0 0 1 -1.2,-1.2 v-10.9 a1.2,1.2 0 0 1 1.2,-1.2 z" fill="url(#mk)" stroke="#8c3a33" stroke-width="1"/>
<!-- scale -->
<rect x="935.800" y="239.100" width="68.800" height="4" fill="#d3e4e8" stroke="#43636a" stroke-width="1.300"/>
<!-- nav -->
<path d="M8,8 H254.500 V28 H28.200 V100.800 H8 Z" fill="#6886b0" opacity=".95"/><path d="M8,8.400 H254.500" stroke="#5b7aa3" stroke-width=".9" opacity=".8"/><path d="M29.500,29 V100.800" stroke="#b9d3f3" stroke-width="2.400" opacity=".45"/>
<circle cx="37.3" cy="36.8" r="16.6" fill="url(#cmp)" stroke="#b4cbe6" stroke-width="1.6"/>
<g fill="#a9c8ec" stroke="none">
<path d="M37.3,24 l3,3.6 h-2 v2.8 h-2 v-2.8 h-2 z"/>
<path d="M37.3,49.6 l3,-3.6 h-2 v-2.8 h-2 v2.8 h-2 z"/>
<path d="M24.5,36.8 l3.6,-3 v2 h2.8 v2 h-2.8 v2 z"/>
<path d="M50.1,36.8 l-3.6,-3 v2 h-2.8 v2 h2.8 v2 z"/>
</g>
<g fill="none" stroke="#bccfe9" stroke-width="1.300">
<circle cx="19" cy="70" r="3.6"/><path d="M16.4,72.8 L13.6,76"/><path d="M17.3,70 h3.4 M19,68.3 v3.4" stroke-width="1"/>
<circle cx="19" cy="89.5" r="3.6"/><path d="M16.4,92.3 L13.6,95.5"/><path d="M17.3,89.5 h3.4" stroke-width="1"/>
</g>
<path d="M156.800,24.300 h6 l-3,3.600 z" fill="#486892"/><path d="M76.500,27.800 l2,-1.800 l2,1.800 z" fill="#a9bfdc" opacity=".8"/>
</g>
</svg>
<div class="navt" style="left:69.5px">Road</div><div class="navt" style="left:107.5px">Aerial</div><div class="navt" style="left:148.5px">Hybrid</div><div class="navt" style="left:198px">Birdseye</div><div class="navt" style="left:243.5px;opacity:.7">&lt;&lt;</div>
<svg class="abs" style="left:0;top:0" width="80" height="280" viewBox="0 0 80 280"><g fill="none" stroke-linecap="round" stroke-linejoin="round"><path d="M15,252.800 V263.500 M15,259.400 A5.500,3.700 0 1 1 15,259.500 M30.500,256 V263.400 M34.600,256 V263.400 M34.600,259.800 C34.600,257 36.600,255.700 38.800,255.700 C41.400,255.700 43,257.300 43,259.800 V263.400 M48,258.500 A4.600,2.900 0 1 1 48,258.600 M48.500,266 A5,3 0 1 1 48.500,266.100 M55.500,256.300 L58.500,255.200" stroke="#a8a8a8" stroke-width="4.300" opacity=".85"/><path d="M15,252.800 V263.500 M15,259.400 A5.500,3.700 0 1 1 15,259.500 M30.500,256 V263.400 M34.600,256 V263.400 M34.600,259.800 C34.600,257 36.600,255.700 38.800,255.700 C41.400,255.700 43,257.300 43,259.800 V263.400 M48,258.500 A4.600,2.900 0 1 1 48,258.600 M48.500,266 A5,3 0 1 1 48.500,266.100 M55.500,256.300 L58.500,255.200" stroke="#fdfdfd" stroke-width="2.700"/><circle cx="30.400" cy="251.700" r="1.500" fill="#c9b8a8" stroke="#b0a79e" stroke-width=".6"/></g></svg>
<div id="legend"><i class="abs" style="left:7.300px;top:6.100px;width:10.400px;height:10.400px;background:#c6c6c6"></i><span style="left:21px;letter-spacing:-0.103px">Parcel</span>
<svg class="abs" style="left:55.500px;top:5.800px" width="8.400" height="11" viewBox="0 0 8.400 11"><defs><linearGradient id="pg" x1="0" y1="0" x2="0" y2="1"><stop offset="0" stop-color="#7fb59c"/><stop offset=".6" stop-color="#4f8f76"/><stop offset="1" stop-color="#2c5a48"/></linearGradient></defs><path d="M4.200,0.400 C6.600,0.400 7.900,2.100 7.900,4 C7.900,6.300 5.400,7.700 4.200,10.700 C3,7.700 0.500,6.300 0.500,4 C0.500,2.100 1.800,0.400 4.200,0.400 Z" fill="url(#pg)" stroke="#2f5a48" stroke-width=".5"/></svg>
<span style="left:67.700px;letter-spacing:-0.102px">Active</span></div>
<div id="tb">
<svg class="abs" style="left:0;top:0" width="31" height="161" viewBox="0 0 31 161">
<defs><linearGradient id="selg" x1="0" y1="0" x2="1" y2="1"><stop offset="0" stop-color="#3f78b8"/><stop offset=".5" stop-color="#6d97c6"/><stop offset="1" stop-color="#c9d0d6"/></linearGradient>
<linearGradient id="carg" x1="0" y1="0" x2="0" y2="1"><stop offset="0" stop-color="#5aa3e0"/><stop offset="1" stop-color="#1f66ad"/></linearGradient></defs>
<path d="M8.500,20 L23.500,6.200" stroke="#cfcfcf" stroke-width="2.600" stroke-linecap="round"/><path d="M8.300,19.600 L23.300,5.800" stroke="#f8f8f8" stroke-width="1.700" stroke-linecap="round"/><path d="M8,20.600 h9" stroke="#cdcdcd" stroke-width=".9"/>
<rect x="8.300" y="29" width="14.200" height="15" fill="url(#selg)"/><rect x="8.300" y="29" width="8" height="8.500" fill="#3b74b5" opacity=".55"/><rect x="15.500" y="36" width="7" height="7.500" fill="#dfe3e6" opacity=".75"/><path d="M8.300,44.300 h14.200" stroke="#7d8fa6" stroke-width="1" stroke-dasharray="1.600,1"/><path d="M8.300,29.200 h14.200" stroke="#8ea6c4" stroke-width=".8" stroke-dasharray="1.600,1"/>
<path d="M8.300,69.300 L15.500,62.200" stroke="#1f3f6b" stroke-width="1.700" stroke-linecap="round"/><path d="M12.300,59.800 L16.600,57.200 L15.800,55.600 L19.800,53.200 L24.400,58 L22,61.800 L20.600,61 L17.800,65.300 Z" fill="#3d8fd6" stroke="#2b67a8" stroke-width=".7" stroke-linejoin="round"/><path d="M17.200,57.500 L20,55.200" stroke="#a5d0f5" stroke-width="1"/>
<rect x="8.300" y="77.600" width="16.400" height="14" rx="1" fill="#f4f7f9" stroke="#9fb0bd" stroke-width="1"/><path d="M10,88.500 L13.500,83 L16.200,86.500 L19.500,81.500 L23,85" fill="none" stroke="#3a8fd0" stroke-width="1.700"/><path d="M10,83.500 L13.500,87.500 L16.200,83.500 L19.500,87.500 L23,83" fill="none" stroke="#1d4d80" stroke-width="1.100"/><path d="M9.500,90 h14" stroke="#7ec4b4" stroke-width="1"/>
<path d="M10.800,103 h3.600 l.8,3.200 h2.800 l.8,-3.200 h3.600 l2.400,12.800 q.2,1.800 -1.600,1.800 h-3.600 q-1.600,0 -1.700,-1.700 l-.5,-5.400 h-1.600 l-.5,5.400 q-.1,1.700 -1.700,1.700 h-3.600 q-1.800,0 -1.600,-1.800 z" fill="#4a4a4a" stroke="#2e2e2e" stroke-width=".5"/><path d="M9.300,113.600 h5.400 M18.600,113.600 h5.400" stroke="#8a8a8a" stroke-width=".8"/>
<path d="M7,136.500 q-.4,-3.600 3.200,-4.200 l2.800,-4 q.5,-.8 1.500,-.8 h6 q1,0 1.500,.8 l2,3.600 q2.200,.6 2,3.400 v1.400 h-19 z" fill="url(#carg)" stroke="#1e568f" stroke-width=".7"/><path d="M11.800,131.800 l1.900,-2.700 h6.300 l1.500,2.700 z" fill="#cfe5f7"/><circle cx="11.500" cy="137.300" r="2.300" fill="#2b2b2b"/><circle cx="21.300" cy="137.300" r="2.300" fill="#2b2b2b"/><circle cx="11.500" cy="137.300" r=".9" fill="#9a9a9a"/><circle cx="21.300" cy="137.300" r=".9" fill="#9a9a9a"/>
<rect x="0" y="145.600" width="31" height="15" fill="#e1e1e1"/><path d="M0,145.400 h31" stroke="#b9b9b9"/>
<ellipse cx="16.200" cy="153.500" rx="4.500" ry="4" fill="#d63232" stroke="#a61d1d" stroke-width=".7"/><rect x="13.200" y="152.500" width="6" height="2" rx=".4" fill="#fff"/>
</svg></div>
<div id="scaleT" style="letter-spacing:-0.188px">50 yards</div>
<div id="copy">&copy; 2013 Microsoft - <u>Maps Live Search</u></div>

<div id="split"></div>
<div class="abs" style="left:508px;top:278.200px;width:12px;height:3.400px;background:linear-gradient(#c2c2c2,#c2c2c2 40%,#adadad 50%,#c2c2c2 60%);border-radius:.5px"></div>
<div class="abs" style="left:0;top:279.500px;width:4.800px;height:28.500px;background:#f4f4f4;border:1px solid #9a9a9a;border-left:none;box-sizing:border-box"></div>
<div class="abs" style="left:0px;top:292.300px;width:0;height:0;border:2.500px solid transparent;border-right:2.600px solid #444;border-left:none"></div>
<div class="abs" style="left:1019px;top:0;width:5px;height:547px;background:linear-gradient(90deg,#f4f4f4 0,#f0f0f0 70%,#dcdcdc 85%,#cfcfcf)"></div>
<div id="panel"></div>
<div id="inner"></div>
<!-- toolbar -->
<svg class="abs" style="left:14px;top:288px" width="17" height="16" viewBox="0 0 17 16"><rect x="4.500" y="1.300" width="8" height="4.500" fill="#eef3f2" stroke="#a9b1b4" stroke-width=".8"/><rect x="1.200" y="5" width="14.600" height="6.400" rx="1.500" fill="#d4dadd" stroke="#9fa8ad" stroke-width=".8"/><path d="M3,7 h11" stroke="#f1f4f5" stroke-width="1"/><rect x="4.300" y="9.600" width="8.400" height="4.600" fill="#f7f9f9" stroke="#a9b1b4" stroke-width=".8"/><path d="M5.600,11.500 h5.800 M5.600,12.900 h5.800" stroke="#b9c0c4" stroke-width=".6"/></svg>
<div class="tbt" style="left:34px;font-size:9.1px;letter-spacing:0.593px;">Print Grid/Map</div>
<div class="abs" style="left:109px;top:294px;width:0;height:0;border:3.100px solid transparent;border-top:3.700px solid #4a4a4a;border-bottom:none"></div>
<svg class="abs" style="left:126px;top:290px" width="15" height="12" viewBox="0 0 15 12"><rect x=".5" y=".5" width="14" height="10.600" fill="#fdfdfd" stroke="#98a3a9"/><path d="M2.800,4.600 h4.500 M2.800,6.500 h6.500 M2.800,8.400 h8.500" stroke="#b3babf" stroke-width="1"/><path d="M8,7.500 l3,-4" stroke="#c8ccd0" stroke-width=".8"/><path d="M10.300,1 h3.700 v3.700 z" fill="#62c2a3"/></svg>
<div class="tbt" style="left:144.5px;font-size:9.1px;letter-spacing:0.626px;">Email Grid/Map</div>
<div class="abs" style="left:224px;top:294px;width:0;height:0;border:3.100px solid transparent;border-top:3.700px solid #4a4a4a;border-bottom:none"></div>
<div class="cv" style="left:842px;font-size:8.4px;letter-spacing:0.279px;">Change View:</div>
<div class="cv" style="left:905px;font-size:8.4px;letter-spacing:0.22px;color:#2c7398">Map</div><div class="cv" style="left:926.800px;color:#8a8a8a;font-weight:bold">|</div>
<div class="cv" style="left:932.5px;font-size:8.4px;letter-spacing:0.033px;color:#2c7398">Grid</div><div class="cv" style="left:953.600px;color:#8a8a8a;font-weight:bold">|</div>
<div class="cv" style="left:959px;font-size:8.4px;letter-spacing:0.332px;">Split</div>
<svg class="abs" style="left:986px;top:289px" width="24" height="14" viewBox="0 0 24 14"><defs><radialGradient id="hg" cx=".4" cy=".3" r=".8"><stop offset="0" stop-color="#7fb0ec"/><stop offset="1" stop-color="#2a5fb8"/></radialGradient></defs><circle cx="7" cy="7" r="5.800" fill="url(#hg)" stroke="#3a68b0" stroke-width=".6"/><text x="7" y="10.300" text-anchor="middle" font-family="Liberation Sans, sans-serif" font-weight="bold" font-size="9.500" fill="#fff">?</text><path d="M15.500,5.500 h5 l-2.500,3 z" fill="#2f5f9f"/></svg>
<div class="res" style="left:13px;font-size:8.5px;letter-spacing:0.504px;">17 results, 11 selected</div>
<!-- grid -->
<div class="row alt" style="top:344.0px"><span class="cb"><svg width="10" height="9" viewBox="0 0 10 9" style="overflow:visible"><path d="M1.500,4 L3.600,6.700 L8.200,0.600" fill="none" stroke="#2d5f99" stroke-width="1.800"/></svg></span><span class="t" style="left:18.5px;letter-spacing:-0.033px">1</span><svg class="pin" width="8" height="11" viewBox="0 0 8 11"><path d="M4,0.3 C6.2,0.3 7.6,1.9 7.6,3.8 C7.6,6 5.2,7.6 4,10.6 C2.8,7.6 0.4,6 0.4,3.8 C0.4,1.9 1.8,0.3 4,0.3 Z" fill="#61409a" stroke="#4a2c78" stroke-width=".5"/></svg><span class="t" style="left:85.5px;letter-spacing:0.454px">7547-001-007</span><span class="t" style="left:395px;letter-spacing:0.596px">09/22/1994</span><span class="t" style="left:532.5px;letter-spacing:0.408px">17,492</span><span class="t" style="left:702px;letter-spacing:0.387px">D &amp; M Seven Limited Ptnshp</span></div><div class="row" style="top:361.2px"><span class="cb"><svg width="10" height="9" viewBox="0 0 10 9" style="overflow:visible"><path d="M1.500,4 L3.600,6.700 L8.200,0.600" fill="none" stroke="#2d5f99" stroke-width="1.800"/></svg></span><span class="t" style="left:18.5px;letter-spacing:-0.033px">2</span><span class="t" style="left:85.5px;letter-spacing:0.454px">7547-001-008</span><span class="t" style="left:395px;letter-spacing:0.596px">09/22/1994</span><span class="t" style="left:532.5px;letter-spacing:0.408px">11,999</span><span class="t" style="left:702px;letter-spacing:0.387px">D &amp; M Seven Limited Ptnshp</span></div><div class="row alt" style="top:378.4px"><span class="cb"><svg width="10" height="9" viewBox="0 0 10 9" style="overflow:visible"><path d="M1.500,4 L3.600,6.700 L8.200,0.600" fill="none" stroke="#2d5f99" stroke-width="1.800"/></svg></span><span class="t" style="left:18.5px;letter-spacing:-0.033px">3</span><span class="t" style="left:85.5px;letter-spacing:0.454px">7547-001-009</span><span class="t" style="left:395px;letter-spacing:0.596px">09/22/1994</span><span class="t" style="left:532.5px;letter-spacing:0.408px">12,024</span><span class="t" style="left:702px;letter-spacing:0.387px">D &amp; M Seven Limited Ptnshp</span></div><div class="row" style="top:395.6px"><span class="cb"><svg width="10" height="9" viewBox="0 0 10 9" style="overflow:visible"><path d="M1.500,4 L3.600,6.700 L8.200,0.600" fill="none" stroke="#2d5f99" stroke-width="1.800"/></svg></span><span class="t" style="left:18.5px;letter-spacing:-0.033px">4</span><span class="t" style="left:85.5px;letter-spacing:0.454px">7547-001-024</span><span class="t" style="left:395px;letter-spacing:0.596px">09/22/1994</span><span class="t" style="left:532.5px;letter-spacing:0.408px">10,009</span><span class="t" style="left:702px;letter-spacing:0.387px">D &amp; M Seven Limited Ptnshp</span></div><div class="row alt" style="top:412.8px"><span class="cb"><svg width="10" height="9" viewBox="0 0 10 9" style="overflow:visible"><path d="M1.500,4 L3.600,6.700 L8.200,0.600" fill="none" stroke="#2d5f99" stroke-width="1.800"/></svg></span><span class="t" style="left:18.5px;letter-spacing:-0.033px">5</span><span class="t" style="left:85.5px;letter-spacing:0.454px">7547-001-025</span><span class="t" style="left:395px;letter-spacing:0.596px">09/22/1994</span><span class="t" style="left:532.5px;letter-spacing:0.408px">5,924</span><span class="t" style="left:702px;letter-spacing:0.387px">D &amp; M Seven Limited Ptnshp</span></div><div class="row sel" style="top:430.0px"><span class="cb"><svg width="10" height="9" viewBox="0 0 10 9" style="overflow:visible"><path d="M1.500,4 L3.600,6.700 L8.200,0.600" fill="none" stroke="#2d5f99" stroke-width="1.800"/></svg></span><span class="t" style="left:18.5px;letter-spacing:-0.033px">6</span><span class="t" style="left:85.5px;letter-spacing:0.454px">7547-001-026</span><span class="t" style="left:395px;letter-spacing:0.596px">09/22/1994</span><span class="t" style="left:532.5px;letter-spacing:0.408px">5,336</span><span class="t" style="left:702px;letter-spacing:0.387px">D &amp; M Seven Limited Ptnshp</span></div><div class="row alt" style="top:447.2px"><span class="cb"><svg width="10" height="9" viewBox="0 0 10 9" style="overflow:visible"><path d="M1.500,4 L3.600,6.700 L8.200,0.600" fill="none" stroke="#2d5f99" stroke-width="1.800"/></svg></span><span class="t" style="left:18.5px;letter-spacing:-0.033px">7</span><span class="t" style="left:85.5px;letter-spacing:0.454px">7547-002-006</span><span class="t" style="left:395px;letter-spacing:0.596px">09/22/1994</span><span class="t" style="left:532.5px;letter-spacing:0.408px">499</span><span class="t" style="left:702px;letter-spacing:0.387px">D &amp; M Seven Limited Ptnshp</span></div><div class="row" style="top:464.4px"><span class="cb"><svg width="10" height="9" viewBox="0 0 10 9" style="overflow:visible"><path d="M1.500,4 L3.600,6.700 L8.200,0.600" fill="none" stroke="#2d5f99" stroke-width="1.800"/></svg></span><span class="t" style="left:18.5px;letter-spacing:-0.033px">8</span><span class="t" style="left:85.5px;letter-spacing:0.454px">7547-002-007</span><span class="t" style="left:395px;letter-spacing:0.596px">09/22/1994</span><span class="t" style="left:532.5px;letter-spacing:0.408px">1,319</span><span class="t" style="left:702px;letter-spacing:0.387px">D &amp; M Seven Limited Ptnshp</span></div><div class="row alt" style="top:481.6px"><span class="cb"><svg width="10" height="9" viewBox="0 0 10 9" style="overflow:visible"><path d="M1.500,4 L3.600,6.700 L8.200,0.600" fill="none" stroke="#2d5f99" stroke-width="1.800"/></svg></span><span class="t" style="left:18.5px;letter-spacing:-0.033px">9</span><span class="t" style="left:85.5px;letter-spacing:0.454px">7547-002-008</span><span class="t" style="left:395px;letter-spacing:0.596px">09/22/1994</span><span class="t" style="left:532.5px;letter-spacing:0.408px">1,989</span><span class="t" style="left:702px;letter-spacing:0.387px">D &amp; M Seven Limited Ptnshp</span></div><div class="row" style="top:498.8px"><span class="cb"><svg width="10" height="9" viewBox="0 0 10 9" style="overflow:visible"><path d="M1.500,4 L3.600,6.700 L8.200,0.600" fill="none" stroke="#2d5f99" stroke-width="1.800"/></svg></span><span class="t" style="left:18.5px;letter-spacing:-0.033px">10</span><span class="t" style="left:85.5px;letter-spacing:0.454px">7547-002-009</span><span class="t" style="left:395px;letter-spacing:0.596px">09/22/1994</span><span class="t" style="left:532.5px;letter-spacing:0.408px">2,516</span><span class="t" style="left:702px;letter-spacing:0.387px">D &amp; M Seven Limited Ptnshp</span></div><div class="row alt" style="top:516.0px"><span class="cb"><svg width="10" height="9" viewBox="0 0 10 9" style="overflow:visible"><path d="M1.500,4 L3.600,6.700 L8.200,0.600" fill="none" stroke="#2d5f99" stroke-width="1.800"/></svg></span><span class="t" style="left:18.5px;letter-spacing:-0.033px">11</span><span class="t" style="left:85.5px;letter-spacing:0.454px">7547-002-010</span><span class="t" style="left:395px;letter-spacing:0.596px">09/22/1994</span><span class="t" style="left:532.5px;letter-spacing:0.408px">2,905</span><span class="t" style="left:702px;letter-spacing:0.387px">D &amp; M Seven Limited Ptnshp</span></div>
<div id="hdr"></div>
<div class="h" style="left:123px;letter-spacing:0.281px">APN</div><div class="h" style="left:233px;letter-spacing:0.712px">Address</div><div class="h" style="left:336.5px;letter-spacing:0.738px">Sale Price</div><div class="h" style="left:552px;letter-spacing:0.527px">Lot Sq Ft</div><div class="h" style="left:634.5px;letter-spacing:0.831px">Sale Date</div><div class="h" style="left:776.8px;letter-spacing:0.863px">Owner Name</div><div class="h" style="left:408.5px;width:55.5px;overflow:hidden;letter-spacing:.8px">Recording Date</div><div class="h" style="left:483px;width:44.5px;overflow:hidden;letter-spacing:.8px">Building Sq</div><div class="h" style="left:928.5px;width:68px;overflow:hidden;letter-spacing:0.863px">Owner Name 2</div><div class="abs" style="left:14.100px;top:331.300px;width:8.800px;height:8px;border:1px solid #b3b3b3;border-bottom-color:#9a9a9a;border-right-color:#a2a2a2;background:linear-gradient(135deg,#e4e4e4,#fbfbfb)"></div><div class="hs" style="left:38.4px"></div><div class="hs" style="left:57.4px"></div><div class="hs" style="left:78.4px"></div><div class="hs" style="left:171.9px"></div><div class="hs" style="left:314.9px"></div><div class="hs" style="left:389.4px"></div><div class="hs" style="left:464.4px"></div><div class="hs" style="left:526.9px"></div><div class="hs" style="left:601.4px"></div><div class="hs" style="left:696.4px"></div><div class="hs" style="left:901.4px"></div><div class="hm" style="left:26.4px"></div><div class="hm" style="left:53.9px"></div><div class="hm" style="left:73.9px"></div><div class="hm" style="left:93.9px"></div><div class="hm" style="left:186.9px"></div><div class="hm" style="left:330.4px"></div><div class="hm" style="left:405.4px"></div><div class="hm" style="left:479.4px"></div><div class="hm" style="left:542.4px"></div><div class="hm" style="left:617.4px"></div><div class="hm" style="left:711.4px"></div><div class="hm" style="left:916.4px"></div><div class="vl" style="left:53.9px"></div><div class="vl" style="left:73.9px"></div><div class="vl" style="left:93.9px"></div><div class="vl" style="left:186.9px"></div><div class="vl" style="left:330.4px"></div><div class="vl" style="left:405.4px"></div><div class="vl" style="left:479.4px"></div><div class="vl" style="left:542.4px"></div><div class="vl" style="left:617.4px"></div><div class="vl" style="left:711.4px"></div><div class="vl" style="left:916.4px"></div>
<!-- scrollbars -->
<div class="abs" style="left:996.600px;top:327.600px;width:11.700px;height:204px;background:#f3f3f3;border-left:1px solid #d2d2d2;border-top:1px solid #cfcfcf;border-right:1px solid #dedede;box-sizing:border-box"></div>
<div class="abs" style="left:997.600px;top:339.600px;width:10.100px;height:105.600px;background:linear-gradient(90deg,#b9b9b9,#e9e9e9 35%,#f3f3f3 55%,#c4c4c4);border:1px solid #a2a2a2;border-radius:5px;box-sizing:border-box"></div>
<div class="abs" style="left:999.400px;top:331.200px;width:0;height:0;border:3.100px solid transparent;border-bottom:4.600px solid #7d7d7d;border-top:none"></div>
<div class="abs" style="left:999.400px;top:522.600px;width:0;height:0;border:3.100px solid transparent;border-top:4.600px solid #7d7d7d;border-bottom:none"></div>
<div class="abs" style="left:12px;top:531.300px;width:985px;height:11.500px;background:linear-gradient(#8f8f8f,#d9d9d9 14%,#f1f1f1 30%,#f3f3f3);box-shadow:0 -1px 1.500px rgba(0,0,0,.22)"></div>
<div class="abs" style="left:24.200px;top:532.300px;width:566px;height:9.700px;background:linear-gradient(#a9a9a9,#dedede 28%,#f0f0f0 55%,#e4e4e4);border:1px solid #a6a6a6;border-top-color:#8c8c8c;border-radius:5px;box-sizing:border-box"></div>
<div class="abs" style="left:15.400px;top:534px;width:0;height:0;border:3.200px solid transparent;border-right:5.200px solid #858585;border-left:none"></div>
<div class="abs" style="left:986.500px;top:534px;width:0;height:0;border:3.200px solid transparent;border-left:5.200px solid #858585;border-right:none"></div>
<div class="abs" style="left:8px;top:543px;width:1004px;height:1px;background:#c9c9c9"></div>
</div></body></html>
